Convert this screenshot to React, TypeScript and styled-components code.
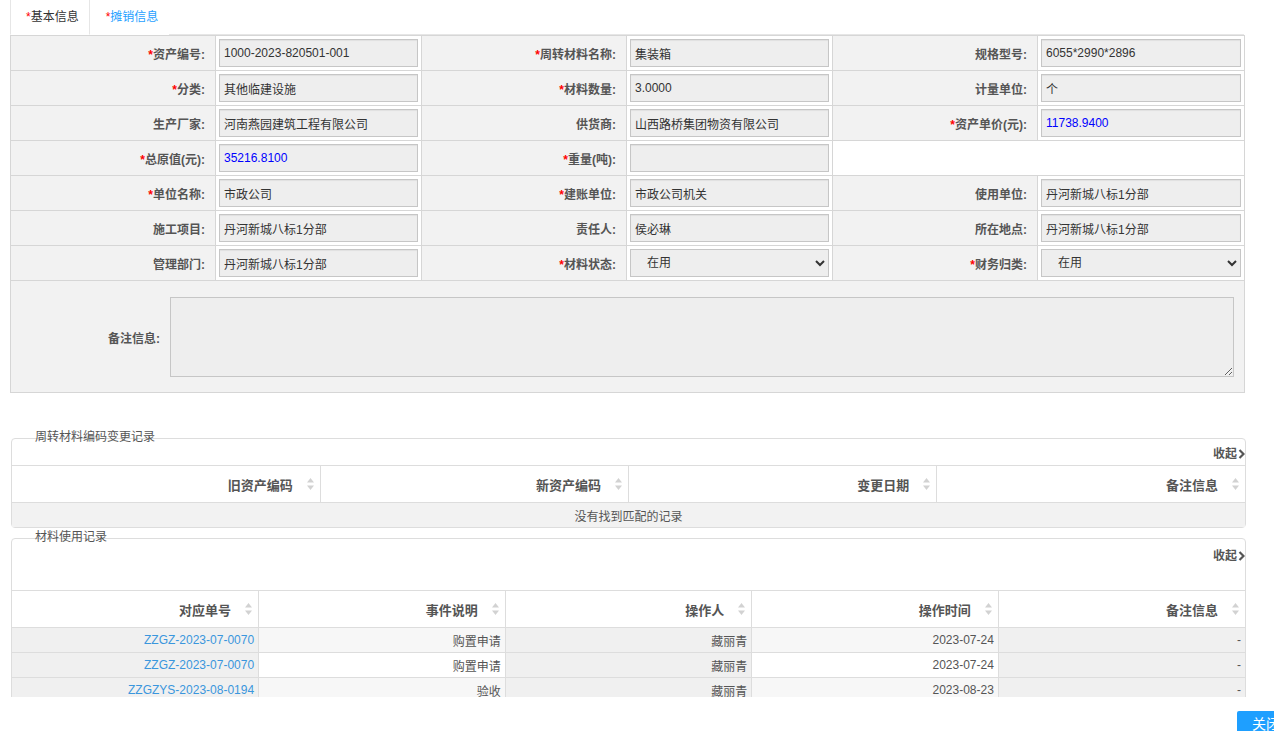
import styled, { createGlobalStyle } from 'styled-components';

const Global = createGlobalStyle`
    body {
        margin: 0;
        overflow: hidden;
        background: #fff;
        font-family: "Liberation Sans", "Noto Sans CJK SC", sans-serif;
        font-size: 12px;
        color: #333;
    }
`;

const Page = styled.div`
    height: 697px;
    overflow: hidden;
    padding: 0 30px 0 10px;
`;

const TabBar = styled.div`
    display: flex;
    height: 35px;
    box-sizing: border-box;
    border-bottom: 1px solid #e6e6e6;
`;

const Tab = styled.div<{ $active?: boolean }>`
    padding: 0 10px 0 15px;
    line-height: 34px;
    margin-bottom: -1px;
    background: #fff;
    color: ${p => (p.$active ? '#333' : '#1e9fff')};
    border: 1px solid ${p => (p.$active ? '#e6e6e6' : 'transparent')};
    border-top: none;
    border-bottom-color: ${p => (p.$active ? '#fff' : 'transparent')};
`;

const Star = styled.span`
    color: #f00;
`;

const FormTable = styled.table`
    width: 1234px;
    border-collapse: collapse;
    table-layout: fixed;
    border: 1px solid #d6d6d6;
`;

const Label = styled.td`
    height: 34px;
    background: #f2f2f2;
    border: 1px solid #d6d6d6;
    text-align: right;
    padding: 0 10px 0 0;
    font-weight: bold;
    color: #555;
    white-space: nowrap;
`;

const Field = styled.td`
    background: #fff;
    border: 1px solid #d6d6d6;
    padding: 3px;
`;

const Input = styled.input<{ $blue?: boolean }>`
    display: block;
    width: 100%;
    height: 28px;
    box-sizing: border-box;
    border: 1px solid #c6c6c6;
    box-shadow: inset 0 1px 1px rgba(0, 0, 0, 0.06);
    background: #eee;
    padding: 0 4px;
    font-family: inherit;
    font-size: 12px;
    color: ${p => (p.$blue ? '#00f' : '#333')};
    outline: none;
`;

const Select = styled.select`
    display: block;
    width: 100%;
    height: 28px;
    box-sizing: border-box;
    border: 1px solid #c6c6c6;
    background: #eee;
    padding: 0 4px 0 12px;
    font-family: inherit;
    font-size: 12px;
    color: #333;
`;

const RemarkCell = styled.td`
    background: #f2f2f2;
    border: 1px solid #d6d6d6;
    padding: 16px 10px 15px 0;
`;

const RemarkRow = styled.div`
    display: flex;
    align-items: center;
    gap: 10px;
`;

const RemarkLabel = styled.div`
    width: 149px;
    text-align: right;
    font-weight: bold;
    color: #555;
`;

const TextArea = styled.textarea`
    flex: 1;
    height: 80px;
    box-sizing: border-box;
    border: 1px solid #c6c6c6;
    background: #eee;
    resize: vertical;
    font-family: inherit;
    outline: none;
`;

const Section = styled.div<{ $top: number }>`
    position: relative;
    width: 1233px;
    margin: ${p => p.$top}px 0 0 1px;
    border: 1px solid #ddd;
    border-radius: 4px;
`;

const Legend = styled.div`
    position: absolute;
    top: -9px;
    left: 23px;
    line-height: 14px;
    color: #555;
`;

const Toolbar = styled.div<{ $h: number; $pt: number }>`
    height: ${p => p.$h}px;
    box-sizing: border-box;
    padding-top: ${p => p.$pt}px;
    display: flex;
    justify-content: flex-end;
    align-items: flex-start;
    line-height: 14px;
    font-weight: bold;
    color: #555;
`;

const Collapse = styled.span`
    display: flex;
    align-items: center;
    gap: 1px;
`;

const Grid = styled.table`
    width: 100%;
    border-collapse: collapse;
    table-layout: fixed;
`;

const Th = styled.th`
    height: 36px;
    padding: 0;
    border-top: 1px solid #ddd;
    border-left: 1px solid #ddd;
    font-size: 13px;
    font-weight: bold;
    color: #555;
    &:first-child {
        border-left: none;
    }
`;

const ThInner = styled.div`
    display: flex;
    justify-content: flex-end;
    align-items: center;
    gap: 14px;
    padding-right: 6px;
`;

const EmptyCell = styled.td`
    height: 24px;
    padding: 0;
    border-top: 1px solid #ddd;
    background: #f2f2f2;
    text-align: center;
    color: #555;
`;

const Td = styled.td<{ $bg: string; $link?: boolean }>`
    height: 24px;
    padding: 0 4px 0 0;
    border-top: 1px solid #ddd;
    border-left: 1px solid #ddd;
    background: ${p => p.$bg};
    text-align: right;
    color: ${p => (p.$link ? '#3a96dd' : '#555')};
    white-space: nowrap;
    &:first-child {
        border-left: none;
    }
`;

const Footer = styled.div`
    display: flex;
    justify-content: flex-end;
    padding-top: 14px;
    margin-right: -21px;
`;

const Button = styled.button`
    height: 26px;
    padding: 0 15px;
    border: none;
    border-radius: 2px;
    background: #1e9fff;
    color: #fff;
    font-family: inherit;
    font-size: 14px;
    line-height: 22px;
    align-self: flex-start;
`;

function SortIcon() {
    return (
        <svg width="7" height="12" viewBox="0 0 7 12">
            <path d="M3.5 0 L7 4.5 L0 4.5 Z" fill="#d2d2d2" />
            <path d="M3.5 12 L7 7.5 L0 7.5 Z" fill="#d2d2d2" />
        </svg>
    );
}

function Chevron() {
    return (
        <svg width="7" height="10" viewBox="0 0 7 10">
            <polyline points="1.5,1 5.5,5 1.5,9" fill="none" stroke="#555" strokeWidth="2.2" />
        </svg>
    );
}

interface FieldDef {
    label: string;
    value?: string;
    req?: boolean;
    blue?: boolean;
    select?: boolean;
}

const rows: (FieldDef | null)[][] = [
    [
        { label: '资产编号', value: '1000-2023-820501-001', req: true },
        { label: '周转材料名称', value: '集装箱', req: true },
        { label: '规格型号', value: '6055*2990*2896' },
    ],
    [
        { label: '分类', value: '其他临建设施', req: true },
        { label: '材料数量', value: '3.0000', req: true },
        { label: '计量单位', value: '个' },
    ],
    [
        { label: '生产厂家', value: '河南燕园建筑工程有限公司' },
        { label: '供货商', value: '山西路桥集团物资有限公司' },
        { label: '资产单价(元)', value: '11738.9400', req: true, blue: true },
    ],
    [
        { label: '总原值(元)', value: '35216.8100', req: true, blue: true },
        { label: '重量(吨)', value: '', req: true },
        null,
    ],
    [
        { label: '单位名称', value: '市政公司', req: true },
        { label: '建账单位', value: '市政公司机关', req: true },
        { label: '使用单位', value: '丹河新城八标1分部' },
    ],
    [
        { label: '施工项目', value: '丹河新城八标1分部' },
        { label: '责任人', value: '侯必琳' },
        { label: '所在地点', value: '丹河新城八标1分部' },
    ],
    [
        { label: '管理部门', value: '丹河新城八标1分部' },
        { label: '材料状态', value: '在用', req: true, select: true },
        { label: '财务归类', value: '在用', req: true, select: true },
    ],
];

const usage = [
    ['ZZGZ-2023-07-0070', '购置申请', '藏丽青', '2023-07-24', '-'],
    ['ZZGZ-2023-07-0070', '购置申请', '藏丽青', '2023-07-24', '-'],
    ['ZZGZYS-2023-08-0194', '验收', '藏丽青', '2023-08-23', '-'],
];

function cellBg(row: number, col: number) {
    if (col % 2 === 0) return '#f0f0f0';
    return row % 2 === 0 ? '#f7f7f7' : '#fff';
}

export default function App() {
    return (
        <>
            <Global />
            <Page>
                <TabBar>
                    <Tab $active><Star>*</Star>基本信息</Tab>
                    <Tab><Star>*</Star>摊销信息</Tab>
                </TabBar>
                <FormTable>
                    <colgroup>
                        <col style={{ width: 205 }} />
                        <col style={{ width: 206 }} />
                        <col style={{ width: 205 }} />
                        <col style={{ width: 206 }} />
                        <col style={{ width: 205 }} />
                        <col style={{ width: 207 }} />
                    </colgroup>
                    <tbody>
                        {rows.map((r, i) => (
                            <tr key={i}>
                                {r.map((f, j) =>
                                    f ? (
                                        [
                                            <Label key={'l' + j}>
                                                {f.req && <Star>*</Star>}
                                                {f.label}:
                                            </Label>,
                                            <Field key={'f' + j}>
                                                {f.select ? (
                                                    <Select defaultValue={f.value}>
                                                        <option>在用</option>
                                                    </Select>
                                                ) : (
                                                    <Input readOnly $blue={f.blue} value={f.value} />
                                                )}
                                            </Field>,
                                        ]
                                    ) : (
                                        <Field key={'e' + j} colSpan={2} />
                                    )
                                )}
                            </tr>
                        ))}
                        <tr>
                            <RemarkCell colSpan={6}>
                                <RemarkRow>
                                    <RemarkLabel>备注信息:</RemarkLabel>
                                    <TextArea readOnly />
                                </RemarkRow>
                            </RemarkCell>
                        </tr>
                    </tbody>
                </FormTable>

                <Section $top={45}>
                    <Legend>周转材料编码变更记录</Legend>
                    <Toolbar $h={26} $pt={8}>
                        <Collapse>收起<Chevron /></Collapse>
                    </Toolbar>
                    <Grid>
                        <thead>
                            <tr>
                                {['旧资产编码', '新资产编码', '变更日期', '备注信息'].map(h => (
                                    <Th key={h}>
                                        <ThInner>{h}<SortIcon /></ThInner>
                                    </Th>
                                ))}
                            </tr>
                        </thead>
                        <tbody>
                            <tr>
                                <EmptyCell colSpan={4}>没有找到匹配的记录</EmptyCell>
                            </tr>
                        </tbody>
                    </Grid>
                </Section>

                <Section $top={10}>
                    <Legend>材料使用记录</Legend>
                    <Toolbar $h={51} $pt={10}>
                        <Collapse>收起<Chevron /></Collapse>
                    </Toolbar>
                    <Grid>
                        <thead>
                            <tr>
                                {['对应单号', '事件说明', '操作人', '操作时间', '备注信息'].map(h => (
                                    <Th key={h}>
                                        <ThInner>{h}<SortIcon /></ThInner>
                                    </Th>
                                ))}
                            </tr>
                        </thead>
                        <tbody>
                            {usage.map((r, i) => (
                                <tr key={i}>
                                    {r.map((c, j) => (
                                        <Td key={j} $bg={cellBg(i, j)} $link={j === 0}>{c}</Td>
                                    ))}
                                </tr>
                            ))}
                        </tbody>
                    </Grid>
                </Section>
            </Page>
            <Footer>
                <Button>关闭</Button>
            </Footer>
        </>
    );
}
